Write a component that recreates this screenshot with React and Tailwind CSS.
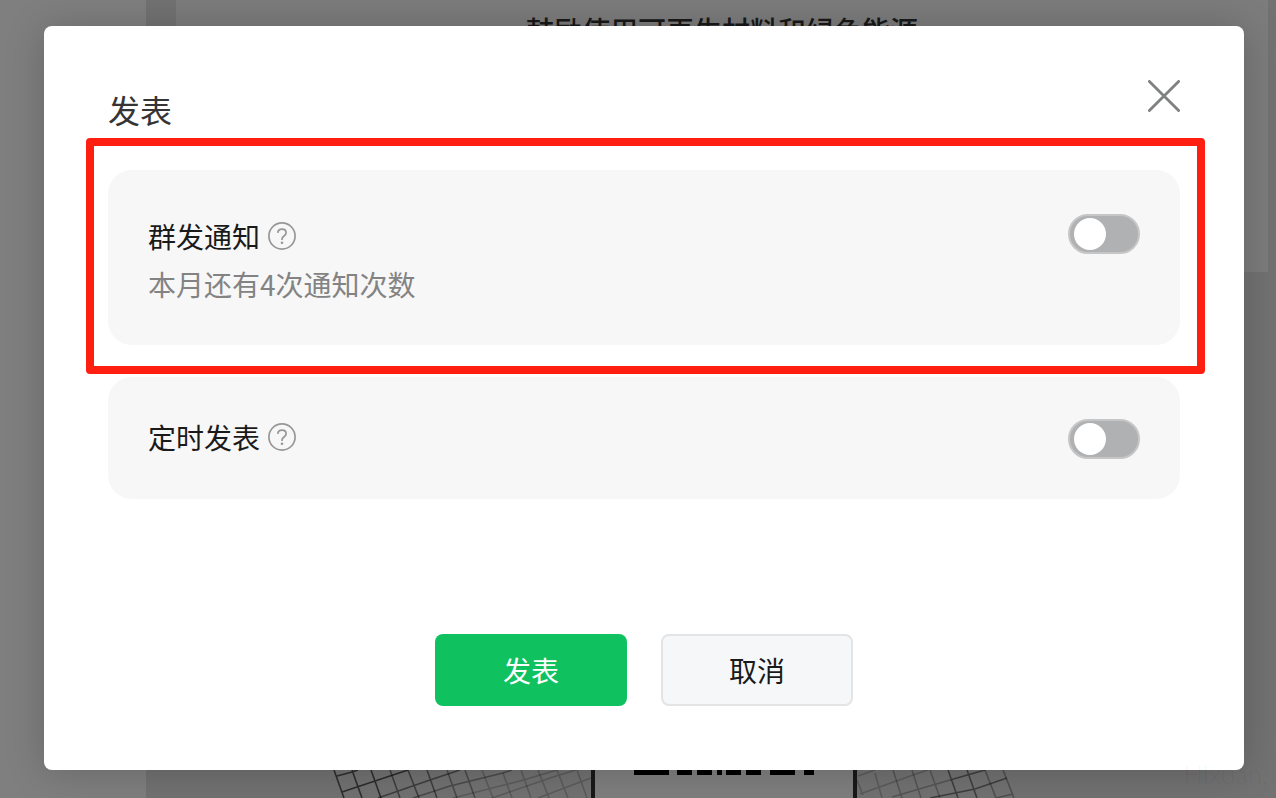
import { useState } from "react";
import clsx from "clsx";

const FONT = "font-['Noto_Sans_CJK_SC','Liberation_Sans',sans-serif]";

// wire mesh on both sides of the photo in the article
const MESH_LEFT = [
  { d: "M14 0L24 28M32 0L42 28M51 0L61 28M17 6L32 2L38 0M22 22L55 11L88 0", o: 0.6 },
  { d: "M70 0L80 28M88 0L99 28M107 0L117 28M58 28L110 10L140 0", o: 0.45 },
  { d: "M127 0L137 28M145 0L155 28M93 28L130 16L183 3L192 0", o: 0.35 },
  { d: "M162 0L173 28M201 0L211 28M133 28L200 11L237 0M183 3L192 28", o: 0.2 },
  { d: "M218 0L229 28M237 0L248 28M257 0L267 28M172 28L233 7L256 0M218 28L271 8", o: 0.2 },
];

const MESH_RIGHT = [
  { d: "M0 10L6 25M18 3L25 28M1 6L18 0M3 24L56 5L71 0", o: 0.2 },
  { d: "M36 0L45 28M55 0L64 28M73 0L83 28M35 27L93 10", o: 0.25 },
  { d: "M91 0L101 28M110 0L120 28M93 10L128 0M73 28L118 19L150 8", o: 0.45 },
  { d: "M128 0L139 28M146 0L157 28M139 28L156 24", o: 0.3 },
];

function Mesh({ lines, className }) {
  return (
    <svg className={className} height="28" fill="none" stroke="#000" strokeWidth="1.6" aria-hidden="true">
      {lines.map((line) => (
        <path key={line.d} d={line.d} strokeOpacity={line.o} />
      ))}
    </svg>
  );
}

function ArticlePreview() {
  return (
    <div className="absolute inset-0 flex overflow-hidden bg-white pl-[146px]" aria-hidden="true">
      <div className="flex flex-1 flex-col justify-between bg-[#e4e4e4]">
        <div className="ml-[30px] mr-2 h-[272px] bg-[#f8f8f8] pt-2.5 text-center">
          <p className="text-[28px] font-medium leading-10 text-[#333]">鼓励使用可再生材料和绿色能源</p>
        </div>
        <div className="flex h-7">
          <Mesh lines={MESH_LEFT} className="ml-[174px] w-[271px] shrink-0" />
          <div className="w-[266px] shrink-0 border-x-4 border-[#333] bg-white">
            <svg className="w-full" height="28" fill="#000">
              <path d="M39 0h35v5h-35zM82 0h15v5h-15zM102 0h15v5h-15zM122 0h5v5h-5zM131 0h15v5h-15zM151 0h15v5h-15zM175 0h25v5h-25zM209 0h10v5h-10z" />
            </svg>
          </div>
          <Mesh lines={MESH_RIGHT} className="w-[160px] shrink-0" />
        </div>
      </div>
    </div>
  );
}

function HelpIcon() {
  return (
    <svg className="size-7" viewBox="0 0 28 28" fill="none" stroke="#979797" strokeWidth="1.7">
      <circle cx="14" cy="14" r="13.1" />
      <path d="M9.8 10.9C9.9 8.5 11.6 7.1 14 7.1C16.4 7.1 18.1 8.6 18.1 10.7C18.1 12.2 17.3 13.1 16 14C14.6 15 14 15.8 14 17.3V18" />
      <circle cx="14" cy="20.8" r="1.3" fill="#979797" stroke="none" />
    </svg>
  );
}

function Switch({ id, checked, onChange }) {
  return (
    <input
      id={id}
      type="checkbox"
      role="switch"
      checked={checked}
      onChange={(e) => onChange(e.target.checked)}
      className="flex h-10 w-[72px] shrink-0 cursor-pointer appearance-none items-center rounded-full border-2 border-[#c6c6c6] bg-[#b0b1b3] pl-1 before:size-8 before:rounded-full before:bg-white before:content-[''] checked:border-[#07c160] checked:bg-[#07c160] checked:pl-8"
    />
  );
}

function OptionRow({ id, label, hint, checked, onChange }) {
  return (
    <div className={clsx("flex justify-between", hint ? "items-start" : "items-end")}>
      <div>
        <div className="flex items-center gap-2">
          <label htmlFor={id} className="text-[28px] leading-11 text-[#1a1a1a]">
            {label}
          </label>
          <button type="button" aria-label={`${label}说明`}>
            <HelpIcon />
          </button>
        </div>
        {hint && <p className="mt-1 text-[28px] leading-11 text-[#838383]">{hint}</p>}
      </div>
      <Switch id={id} checked={checked} onChange={onChange} />
    </div>
  );
}

export default function App() {
  const [notify, setNotify] = useState(false);
  const [schedule, setSchedule] = useState(false);

  return (
    <div className={`relative min-h-screen ${FONT}`}>
      <ArticlePreview />

      <div className="relative min-h-screen bg-black/50 pb-7 pl-11 pr-8 pt-[26px]">
        <div
          role="dialog"
          aria-labelledby="publish-title"
          className="rounded-lg bg-white px-16 pb-16 pt-[54px] shadow-[0_2px_40px_rgba(0,0,0,0.2)]"
        >
          <div className="flex items-start justify-between">
            <h1 id="publish-title" className="mt-[13px] text-[32px] leading-8 text-[#353535]">
              发表
            </h1>
            <button type="button" aria-label="关闭" className="size-8">
              <svg viewBox="0 0 32 32" fill="none" stroke="#7f8080" strokeWidth="2.8" strokeLinecap="round">
                <path d="M1.4 1.4L30.6 30.6M30.6 1.4L1.4 30.6" />
              </svg>
            </button>
          </div>

          <div className="relative mt-[45px] rounded-3xl bg-[#f7f7f7] px-10 pb-[39px] pt-11">
            <OptionRow
              id="notify"
              label="群发通知"
              hint="本月还有4次通知次数"
              checked={notify}
              onChange={setNotify}
            />
            <div className="pointer-events-none absolute -bottom-[29px] -left-[22px] -right-[25px] -top-8 rounded-[4px] border-8 border-[#ff1f11]" />
          </div>

          <div className="mt-8 rounded-3xl bg-[#f7f7f7] px-10 pb-10 pt-[38px]">
            <OptionRow id="schedule" label="定时发表" checked={schedule} onChange={setSchedule} />
          </div>

          <div className="mt-[135px] flex justify-center gap-[34px]">
            <button type="button" className="h-[72px] w-48 rounded-lg bg-[#10c160] text-[28px] text-white">
              发表
            </button>
            <button
              type="button"
              className="h-[72px] w-48 rounded-lg border-2 border-[#e3e4e5] bg-[#f6f7f9] text-[28px] text-[#1a1a1a]"
            >
              取消
            </button>
          </div>
        </div>
      </div>

      <span className="pointer-events-none absolute bottom-2 right-2 font-['Lato',sans-serif] text-[26px] font-light leading-8 text-black/5">
        Hlxuan.
      </span>
    </div>
  );
}
